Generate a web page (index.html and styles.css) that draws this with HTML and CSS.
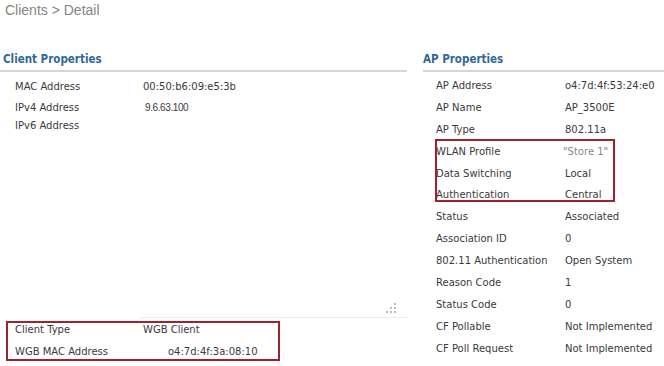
FILE: index.html
```html
<!DOCTYPE html>
<html lang="en">
  <head>
    <meta charset="UTF-8" />
    <title>Clients &gt; Detail</title>
    <link rel="stylesheet" href="styles.css">
  </head>
  <body>
    <h1 class="page-title">Clients &gt; Detail</h1>

    <div class="detail">
      <section class="panel panel-client">
        <h2 class="panel-title">Client Properties</h2>
        <div class="prop-list">
          <div class="prop-row prop-row-first">
            <span class="prop-label">MAC Address</span>
            <span class="prop-value">00:50:b6:09:e5:3b</span>
          </div>
          <div class="prop-row prop-row-ip">
            <span class="prop-label">IPv4 Address</span>
            <span class="prop-value prop-value-ip">9.6.63.100</span>
          </div>
          <div class="prop-row prop-row-tight">
            <span class="prop-label">IPv6 Address</span>
            <span class="prop-value"></span>
          </div>
        </div>

        <div class="panel-spacer"></div>

        <div class="panel-foot">
          <svg class="grip" width="10" height="10" viewBox="0 0 10 10">
            <rect x="8" y="0" width="2" height="2" fill="#bcbcbc" />
            <rect x="4" y="4" width="2" height="2" fill="#bcbcbc" />
            <rect x="8" y="4" width="2" height="2" fill="#bcbcbc" />
            <rect x="0" y="8" width="2" height="2" fill="#bcbcbc" />
            <rect x="4" y="8" width="2" height="2" fill="#bcbcbc" />
            <rect x="8" y="8" width="2" height="2" fill="#bcbcbc" />
          </svg>
        </div>

        <div class="prop-list flagged flagged-client">
          <div class="prop-row prop-row-box">
            <span class="prop-label">Client Type</span>
            <span class="prop-value">WGB Client</span>
          </div>
          <div class="prop-row prop-row-box">
            <span class="prop-label">WGB MAC Address</span>
            <span class="prop-value prop-value-shift">o4:7d:4f:3a:08:10</span>
          </div>
        </div>
      </section>

      <section class="panel panel-ap">
        <h2 class="panel-title">AP Properties</h2>
        <div class="prop-list">
          <div class="prop-row">
            <span class="prop-label">AP Address</span>
            <span class="prop-value">o4:7d:4f:53:24:e0</span>
          </div>
          <div class="prop-row">
            <span class="prop-label">AP Name</span>
            <span class="prop-value">AP_3500E</span>
          </div>
          <div class="prop-row">
            <span class="prop-label">AP Type</span>
            <span class="prop-value">802.11a</span>
          </div>
          <div class="flagged flagged-ap">
            <div class="prop-row">
              <span class="prop-label">WLAN Profile</span>
              <span class="prop-value prop-value-muted">"Store 1"</span>
            </div>
            <div class="prop-row">
              <span class="prop-label">Data Switching</span>
              <span class="prop-value">Local</span>
            </div>
            <div class="prop-row">
              <span class="prop-label">Authentication</span>
              <span class="prop-value">Central</span>
            </div>
          </div>
          <div class="prop-row">
            <span class="prop-label">Status</span>
            <span class="prop-value">Associated</span>
          </div>
          <div class="prop-row">
            <span class="prop-label">Association ID</span>
            <span class="prop-value">0</span>
          </div>
          <div class="prop-row">
            <span class="prop-label">802.11 Authentication</span>
            <span class="prop-value">Open System</span>
          </div>
          <div class="prop-row">
            <span class="prop-label">Reason Code</span>
            <span class="prop-value">1</span>
          </div>
          <div class="prop-row">
            <span class="prop-label">Status Code</span>
            <span class="prop-value">0</span>
          </div>
          <div class="prop-row">
            <span class="prop-label">CF Pollable</span>
            <span class="prop-value">Not Implemented</span>
          </div>
          <div class="prop-row">
            <span class="prop-label">CF Poll Request</span>
            <span class="prop-value">Not Implemented</span>
          </div>
        </div>
      </section>
    </div>
  </body>
</html>
```

FILE: styles.css
```css
body {
  margin: 0;
  background: #fff;
  color: #3a3a3a;
  font-family: "DejaVu Sans", Verdana, sans-serif;
  font-size: 10px;
}

.page-title {
  margin: 0;
  padding: 2px 0 0 5px;
  font: normal 14px/16px "Liberation Sans", Arial, sans-serif;
  color: #858585;
}

.detail {
  display: grid;
  grid-template-columns: 407px 1fr;
  column-gap: 16px;
  margin-top: 34px;
  min-height: 314px;
}

.panel {
  display: flex;
  flex-direction: column;
}

.panel-title {
  margin: 0;
  padding: 0 0 4px 0;
  border-bottom: 2px solid #d6d6d6;
  font: bold 11.5px/14px "DejaVu Sans Condensed", "DejaVu Sans", sans-serif;
  color: #31689a;
}

.panel-client .panel-title {
  padding-left: 3px;
}

.prop-list {
  margin-top: 3px;
}

.panel-client .prop-list {
  margin-top: 2px;
  padding-left: 15px;
}

.panel-ap .prop-list {
  padding-left: 13px;
}

.prop-row {
  display: grid;
  grid-template-columns: 129px 1fr;
  height: 21.9px;
  line-height: 21.9px;
  white-space: nowrap;
}

.panel-client .prop-row {
  grid-template-columns: 128px 1fr;
}

.prop-row-first {
  height: 22px;
  line-height: 22px;
  margin-top: 2px;
}

.prop-row-ip {
  height: 19px;
  line-height: 19px;
}

.prop-row-tight {
  height: 17px;
  line-height: 17px;
}

.prop-row-box {
  height: 22px;
  line-height: 22px;
}

.prop-value-ip {
  padding-left: 2px;
  font-family: "Liberation Sans", Arial, sans-serif;
  font-size: 10px;
  letter-spacing: -0.4px;
}

.prop-value-shift {
  padding-left: 25px;
}

.prop-value-muted {
  color: #8a8a8a;
  margin-left: -2px;
}

.panel-spacer {
  flex: 1;
}

.panel-foot {
  display: flex;
  justify-content: flex-end;
  align-items: flex-start;
  height: 14px;
  margin-left: 140px;
  padding-right: 11px;
  border-bottom: 1px solid #ececec;
}

.grip {
  display: block;
}

/* red highlight boxes drawn over the rows */
.flagged {
  position: relative;
}

.flagged::after {
  content: "";
  position: absolute;
  border: 2px solid #a3202e;
  pointer-events: none;
}

.panel-client .flagged-client {
  margin-top: 1px;
  padding-bottom: 3px;
}

.flagged-client::after {
  top: 2px;
  bottom: 5px;
  left: 6px;
  width: 270px;
}

.flagged-ap::after {
  top: -2px;
  bottom: 4px;
  left: -1px;
  width: 176px;
}
```
